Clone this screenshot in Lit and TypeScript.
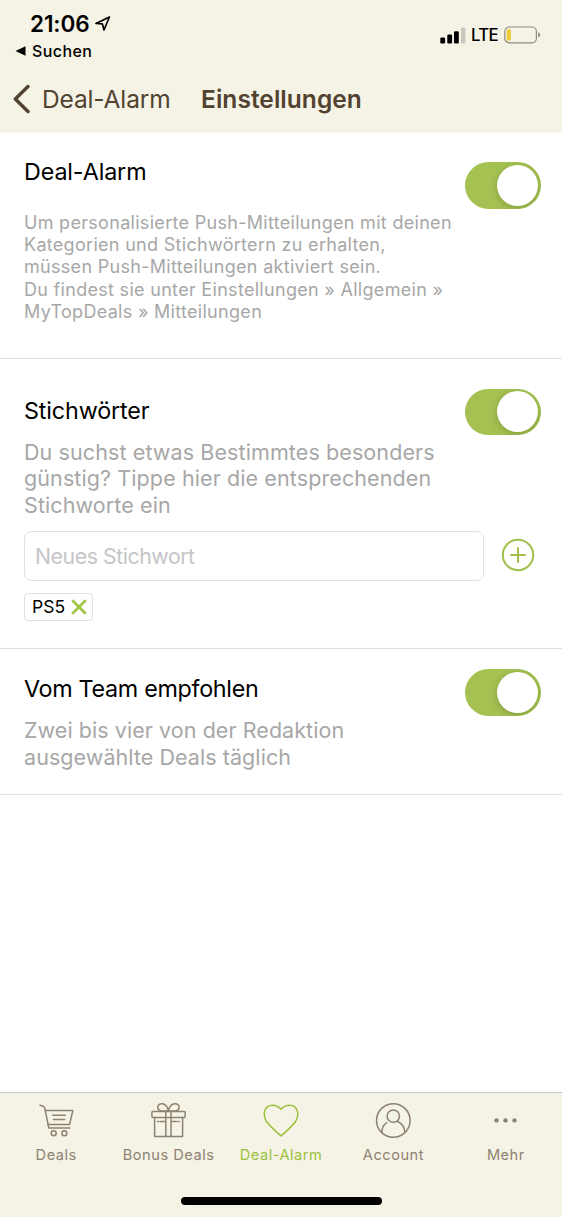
import { LitElement, html, css, svg } from "lit";
import { customElement, property } from "lit/decorators.js";

const cartIcon = svg`
  <path d="M2 3.2 L5.2 4.2 Q6.4 4.6 6.8 6.2 L10.8 26 H31.8" />
  <path d="M7.3 8.6 H34.8 L31.6 22.4 H10" />
  <path d="M14.6 13.2 H27.4 M15.4 17.6 H26.6" />
  <circle cx="15.7" cy="31.3" r="2.5" /><circle cx="26.3" cy="31.3" r="2.5" />`;

const giftIcon = svg`
  <rect x="0.9" y="9.6" width="33.2" height="5.8" rx="0.8" />
  <path d="M3.6 15.4 V34.6 H31.6 V15.4" />
  <path d="M14.8 9.6 V34.6 M20 9.6 V34.6" />
  <path d="M17.4 9 C14 9.2 6.4 9.8 6.7 5.2 C7 0 15.8 0 17.4 9 C19 0 27.9 0 28.2 5.2 C28.4 9.8 20.8 9.2 17.4 9" />
  <path d="M6.6 19.4 h1 M9.2 19.4 h5 M20.6 19.4 h5 M27.2 19.4 h1" />`;

const heartIcon = svg`
  <path d="M18 34 C14 30.3 7 24.5 3.6 19.8 C-.9 12.8 1.2 3.2 9.4 3.2 C12.8 3.2 15.8 4.4 18 7.4 C20.2 4.4 23.2 3.2 26.6 3.2 C34.8 3.2 36.9 12.8 32.4 19.8 C29 24.5 22 30.3 18 34 Z" />`;

const accountIcon = svg`
  <circle cx="18.3" cy="18.5" r="16.8" />
  <circle cx="18.3" cy="14.1" r="6.2" />
  <path d="M6.8 30.2 C7 25.4 8.6 22.4 11.8 20.6 M29.8 30.2 C29.6 25 27.4 21.4 22.2 19.2" />`;

const moreIcon = svg`
  <g fill="currentColor" stroke="none">
    <circle cx="8.5" cy="18.4" r="2.2" /><circle cx="17.5" cy="18.4" r="2.2" /><circle cx="26.5" cy="18.4" r="2.2" />
  </g>`;

@customElement("toggle-switch")
class ToggleSwitch extends LitElement {
  static styles = css`
    :host { display: block; flex: none; }
    .track {
      display: flex; justify-content: flex-end; box-sizing: border-box;
      width: 76.5px; height: 46.5px; padding: 2.8px; border-radius: 24px;
      background: #a4c152; overflow: hidden;
    }
    .knob {
      width: 41px; height: 41px; border-radius: 50%; background: #fff;
      box-shadow: 0 2px 7px rgba(70, 80, 10, 0.3);
    }
  `;
  render() {
    return html`<div class="track" role="switch" aria-checked="true"><div class="knob"></div></div>`;
  }
}

@customElement("tab-item")
class TabItem extends LitElement {
  @property() label = "";
  @property({ attribute: false }) icon: unknown;
  @property({ type: Boolean, reflect: true }) active = false;
  static styles = css`
    :host {
      display: flex; flex-direction: column; align-items: center; flex: 1 1 0;
      color: #8d8272; min-width: 0;
    }
    :host([active]) { color: #9bc13c; }
    svg {
      width: 36px; height: 38px; fill: none; stroke: currentColor;
      stroke-width: 1.5; stroke-linecap: round; stroke-linejoin: round;
    }
    .label {
      margin-top: 5px; font-size: 14.6px; line-height: 20px; letter-spacing: 0.52px;
      white-space: nowrap; font-weight: 400;
    }
  `;
  render() {
    return html`<svg viewBox="0 0 36 38">${this.icon}</svg><span class="label">${this.label}</span>`;
  }
}

@customElement("app-root")
class AppRoot extends LitElement {
  static styles = css`
    :host {
      display: flex; flex-direction: column; width: 100%; height: 100vh;
      background: #fff; color: #000; overflow: hidden;
      font-family: Inter, "Liberation Sans", sans-serif;
    }
    .header { background: #f5f2e6; height: 133px; flex: none; border-bottom: 1px solid #faf9f3; box-sizing: border-box; }
    .status { display: flex; justify-content: space-between; height: 66px; box-sizing: border-box; padding: 11px 21px 0 15px; }
    .clock { display: flex; align-items: center; gap: 6px; padding-left: 15px; height: 25px; }
    .time { font-size: 22.5px; font-weight: 600; line-height: 25px; letter-spacing: -0.1px; }
    .arrow { width: 16px; height: 16px; }
    .return { display: flex; align-items: center; gap: 6px; height: 20px; margin-top: 5px; font-size: 16px; font-weight: 500; letter-spacing: 0.4px; }
    .triangle { width: 11px; height: 10px; }
    .signals { display: flex; align-items: center; height: 20px; margin-top: 14px; }
    .bars { width: 26px; height: 17px; margin-right: 5px; }
    .lte { font-size: 16.8px; font-weight: 500; letter-spacing: -0.7px; margin-right: 6px; }
    .battery { width: 37px; height: 18px; }
    .nav { display: flex; align-items: center; height: 65px; color: #51432f; white-space: nowrap; padding-left: 13px; }
    .chevron { width: 18px; height: 30px; margin-right: 11px; }
    .back { font-size: 24.5px; width: 159px; letter-spacing: -0.15px; }
    .heading { font-size: 24.5px; font-weight: 600; letter-spacing: 0.05px; }
    .content { flex: 1; min-height: 0; }
    .row { display: flex; justify-content: space-between; box-sizing: border-box; padding: 0 21px 0 24px; border-bottom: 1px solid #e0e0e0; }
    .row-alarm { height: 226px; padding-top: 24px; }
    .row-words { height: 290px; padding-top: 37px; flex-direction: column; justify-content: flex-start; }
    .row-team { height: 146px; padding-top: 25px; }
    .copy { white-space: nowrap; flex: 1; min-width: 0; }
    .top { display: flex; }
    .title { font-size: 23.3px; line-height: 30px; letter-spacing: -0.12px; }
    .row-team .title { letter-spacing: -0.3px; }
    .small { margin-top: 24.6px; font-size: 18px; line-height: 22.4px; color: #a7a7a7; letter-spacing: 0.3px; }
    .text { margin-top: 12.5px; font-size: 21.5px; line-height: 26.7px; color: #a7a7a7; letter-spacing: 0.1px; }
    .row-team .text { letter-spacing: 0.06px; margin-top: 13px; }
    .row-alarm toggle-switch { margin-top: 5px; }
    .row-words toggle-switch { margin-top: -7.5px; }
    .row-team toggle-switch { margin-top: -5px; }
    .entry { display: flex; align-items: center; margin-top: 12px; }
    .field { box-sizing: border-box; width: 460px; height: 50.5px; border: 1.4px solid #e2e2e2; border-radius: 7px; padding: 0 10px; font-size: 21.3px; line-height: 48px; color: #c5c5c7; letter-spacing: -0.45px; }
    .plus { width: 34px; height: 34px; margin: -1px 0 0 17px; }
    .chip { display: flex; align-items: center; box-sizing: border-box; width: 69px; height: 28px; margin-top: 12px; padding: 0 5px 0 7px; justify-content: space-between; border: 1.4px solid #e0e0e0; border-radius: 4px; font-size: 17.5px; line-height: 26px; }
    .cross { width: 16px; height: 16px; }
    .tabs { flex: none; height: 125px; box-sizing: border-box; background: #f5f2e6; border-top: 1px solid #cbc9c2; display: flex; flex-direction: column; align-items: center; }
    .tab-list { display: flex; width: 100%; height: 104px; padding-top: 9px; box-sizing: border-box; }
    .home { width: 201px; height: 8px; border-radius: 4px; background: #000; }
  `;

  render() {
    return html`
      <header class="header">
        <div class="status">
          <div>
            <div class="clock">
              <span class="time">21:06</span>
              <svg class="arrow" viewBox="0 0 16 16" fill="none" stroke="#000" stroke-width="1.7" stroke-linejoin="round"><path d="M14.4 1 L1 7.4 L7.4 7.9 L9 14 Z" /></svg>
            </div>
            <div class="return">
              <svg class="triangle" viewBox="0 0 11 10"><path d="M0.5 5 L10.5 0.2 V9.8 Z" /></svg>
              <span>Suchen</span>
            </div>
          </div>
          <div class="signals">
            <svg class="bars" viewBox="0 0 26 17">
              <rect x="0.3" y="10.5" width="4.8" height="6" rx="1.2" /><rect x="7.3" y="7.5" width="4.8" height="9" rx="1.2" />
              <rect x="14" y="4.2" width="4.8" height="12.3" rx="1.2" /><rect x="21" y="0.5" width="4.4" height="16" rx="1.2" fill="#c9c6bd" />
            </svg>
            <span class="lte">LTE</span>
            <svg class="battery" viewBox="0 0 37 18">
              <rect x="0.8" y="1" width="31.6" height="15.8" rx="4.5" fill="none" stroke="#8f8a80" stroke-width="1.2" />
              <rect x="2.7" y="3" width="4.3" height="11.8" rx="2" fill="#eccb3c" />
              <path d="M34.1 6.3 Q36.2 7.2 36.2 8.9 Q36.2 10.6 34.1 11.5 Z" fill="#8f8a80" />
            </svg>
          </div>
        </div>
        <nav class="nav">
          <svg class="chevron" viewBox="0 0 18 30" fill="none" stroke="#51432f" stroke-width="3.4" stroke-linecap="round" stroke-linejoin="round"><path d="M15 2.5 L2.3 15 L15 27.5" /></svg>
          <span class="back">Deal-Alarm</span>
          <span class="heading">Einstellungen</span>
        </nav>
      </header>
      <main class="content">
        <section class="row row-alarm">
          <div class="copy">
            <div class="title">Deal-Alarm</div>
            <div class="small">Um personalisierte Push-Mitteilungen mit deinen<br />Kategorien und Stichwörtern zu erhalten,<br />müssen Push-Mitteilungen aktiviert sein.<br />Du findest sie unter Einstellungen » Allgemein »<br />MyTopDeals » Mitteilungen</div>
          </div>
          <toggle-switch></toggle-switch>
        </section>
        <section class="row row-words">
          <div class="top">
            <div class="copy">
              <div class="title">Stichwörter</div>
              <div class="text">Du suchst etwas Bestimmtes besonders<br />günstig? Tippe hier die entsprechenden<br />Stichworte ein</div>
            </div>
            <toggle-switch></toggle-switch>
          </div>
          <div class="entry">
            <div class="field">Neues Stichwort</div>
            <svg class="plus" viewBox="0 0 34 34" fill="none" stroke="#a1c04b" stroke-width="2" stroke-linecap="round"><circle cx="17" cy="17" r="15.2" /><path d="M17 10 V24 M10 17 H24" /></svg>
          </div>
          <div class="chip"><span>PS5</span><svg class="cross" viewBox="0 0 16 16" fill="none" stroke="#a1c545" stroke-width="2.8" stroke-linecap="round"><path d="M2 2 L14 14 M14 2 L2 14" /></svg></div>
        </section>
        <section class="row row-team">
          <div class="copy">
            <div class="title">Vom Team empfohlen</div>
            <div class="text">Zwei bis vier von der Redaktion<br />ausgewählte Deals täglich</div>
          </div>
          <toggle-switch></toggle-switch>
        </section>
      </main>
      <footer class="tabs">
        <div class="tab-list">
          <tab-item label="Deals" .icon=${cartIcon}></tab-item>
          <tab-item label="Bonus Deals" .icon=${giftIcon}></tab-item>
          <tab-item label="Deal-Alarm" .icon=${heartIcon} active></tab-item>
          <tab-item label="Account" .icon=${accountIcon}></tab-item>
          <tab-item label="Mehr" .icon=${moreIcon}></tab-item>
        </div>
        <div class="home"></div>
      </footer>
    `;
  }
}
